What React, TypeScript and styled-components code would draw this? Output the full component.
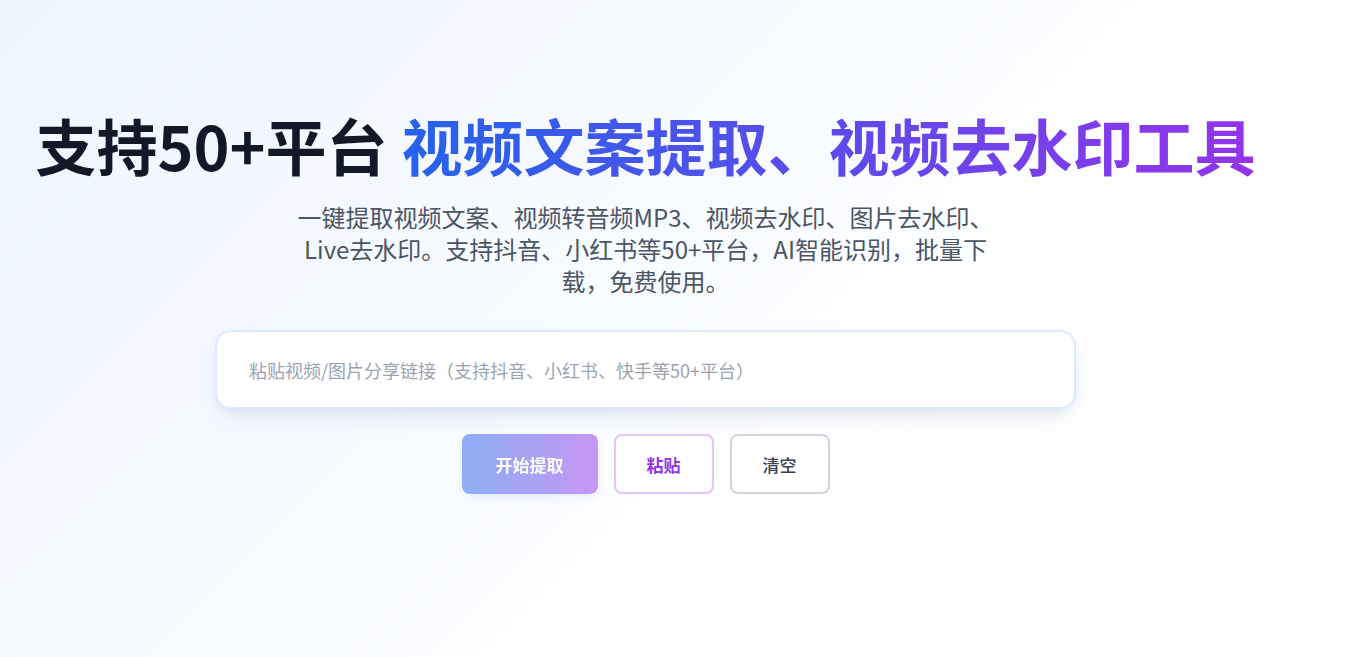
import React from "react";
import styled, { createGlobalStyle } from "styled-components";

const Global = createGlobalStyle`
  html, body { margin: 0; padding: 0; }
  body {
    font-family: "Noto Sans CJK SC", "Noto Sans", sans-serif;
    background: linear-gradient(135deg, #eff6ff 0%, #f8fbff 45%, #ffffff 70%, #ffffff 100%);
    min-height: 100vh;
  }
  * { box-sizing: border-box; }
`;

const Page = styled.main`
  min-height: 657px;
  display: flex;
  flex-direction: column;
  align-items: center;
  padding: 107px 55px 0 0;
`;

const Title = styled.h1`
  margin: 0;
  font-size: 61px;
  line-height: 75px;
  font-weight: 700;
  color: #111827;
  white-space: nowrap;
  letter-spacing: 0;
`;

const Gradient = styled.span`
  background: linear-gradient(90deg, #2563eb 0%, #9333ea 100%);
  -webkit-background-clip: text;
  background-clip: text;
  color: transparent;
`;

const Subtitle = styled.p`
  margin: 19px 0 0;
  max-width: 712px;
  font-size: 24px;
  line-height: 32px;
  color: #4b5563;
  text-align: center;
`;

const InputBox = styled.div`
  margin-top: 33px;
  width: 861px;
  height: 79px;
  background: #ffffff;
  border: 2px solid #dbeafe;
  border-radius: 16px;
  box-shadow: 0 10px 24px -6px rgba(30, 58, 138, 0.14), 0 4px 8px -4px rgba(30, 58, 138, 0.08);
  display: flex;
  align-items: center;
  padding: 0 30px;
`;

const Input = styled.input`
  flex: 1;
  border: none;
  outline: none;
  background: transparent;
  font-family: "Noto Sans CJK SC", sans-serif;
  font-size: 18px;
  color: #111827;
  &::placeholder { color: #9ca3af; }
`;

const Actions = styled.div`
  margin-top: 25px;
  display: flex;
  gap: 16px;
`;

const Button = styled.button<{ $variant: "primary" | "accent" | "plain" }>`
  height: 60px;
  width: ${(p) => (p.$variant === "primary" ? "136px" : "100px")};
  border-radius: 8px;
  font-family: "Noto Sans CJK SC", sans-serif;
  font-size: 17px;
  font-weight: ${(p) => (p.$variant === "plain" ? 500 : 700)};
  cursor: pointer;
  display: flex;
  align-items: center;
  justify-content: center;
  ${(p) =>
    p.$variant === "primary"
      ? `
    border: none;
    color: #ffffff;
    background: linear-gradient(90deg, #2563eb, #9333ea);
    opacity: 0.5;
    box-shadow: 0 4px 10px -2px rgba(37, 99, 235, 0.25);
  `
      : p.$variant === "accent"
      ? `
    border: 2px solid #e3c4f7;
    color: #9333ea;
    background: #ffffff;
  `
      : `
    border: 2px solid #d1d5db;
    color: #374151;
    background: #ffffff;
  `}
`;

export default function App() {
  return (
    <>
      <Global />
      <Page>
        <Title>
          支持50+平台 <Gradient>视频文案提取、视频去水印工具</Gradient>
        </Title>
        <Subtitle>
          一键提取视频文案、视频转音频MP3、视频去水印、图片去水印、Live去水印。支持抖音、小红书等50+平台，AI智能识别，批量下载，免费使用。
        </Subtitle>
        <InputBox>
          <Input placeholder="粘贴视频/图片分享链接（支持抖音、小红书、快手等50+平台）" />
        </InputBox>
        <Actions>
          <Button $variant="primary">开始提取</Button>
          <Button $variant="accent">粘贴</Button>
          <Button $variant="plain">清空</Button>
        </Actions>
      </Page>
    </>
  );
}
